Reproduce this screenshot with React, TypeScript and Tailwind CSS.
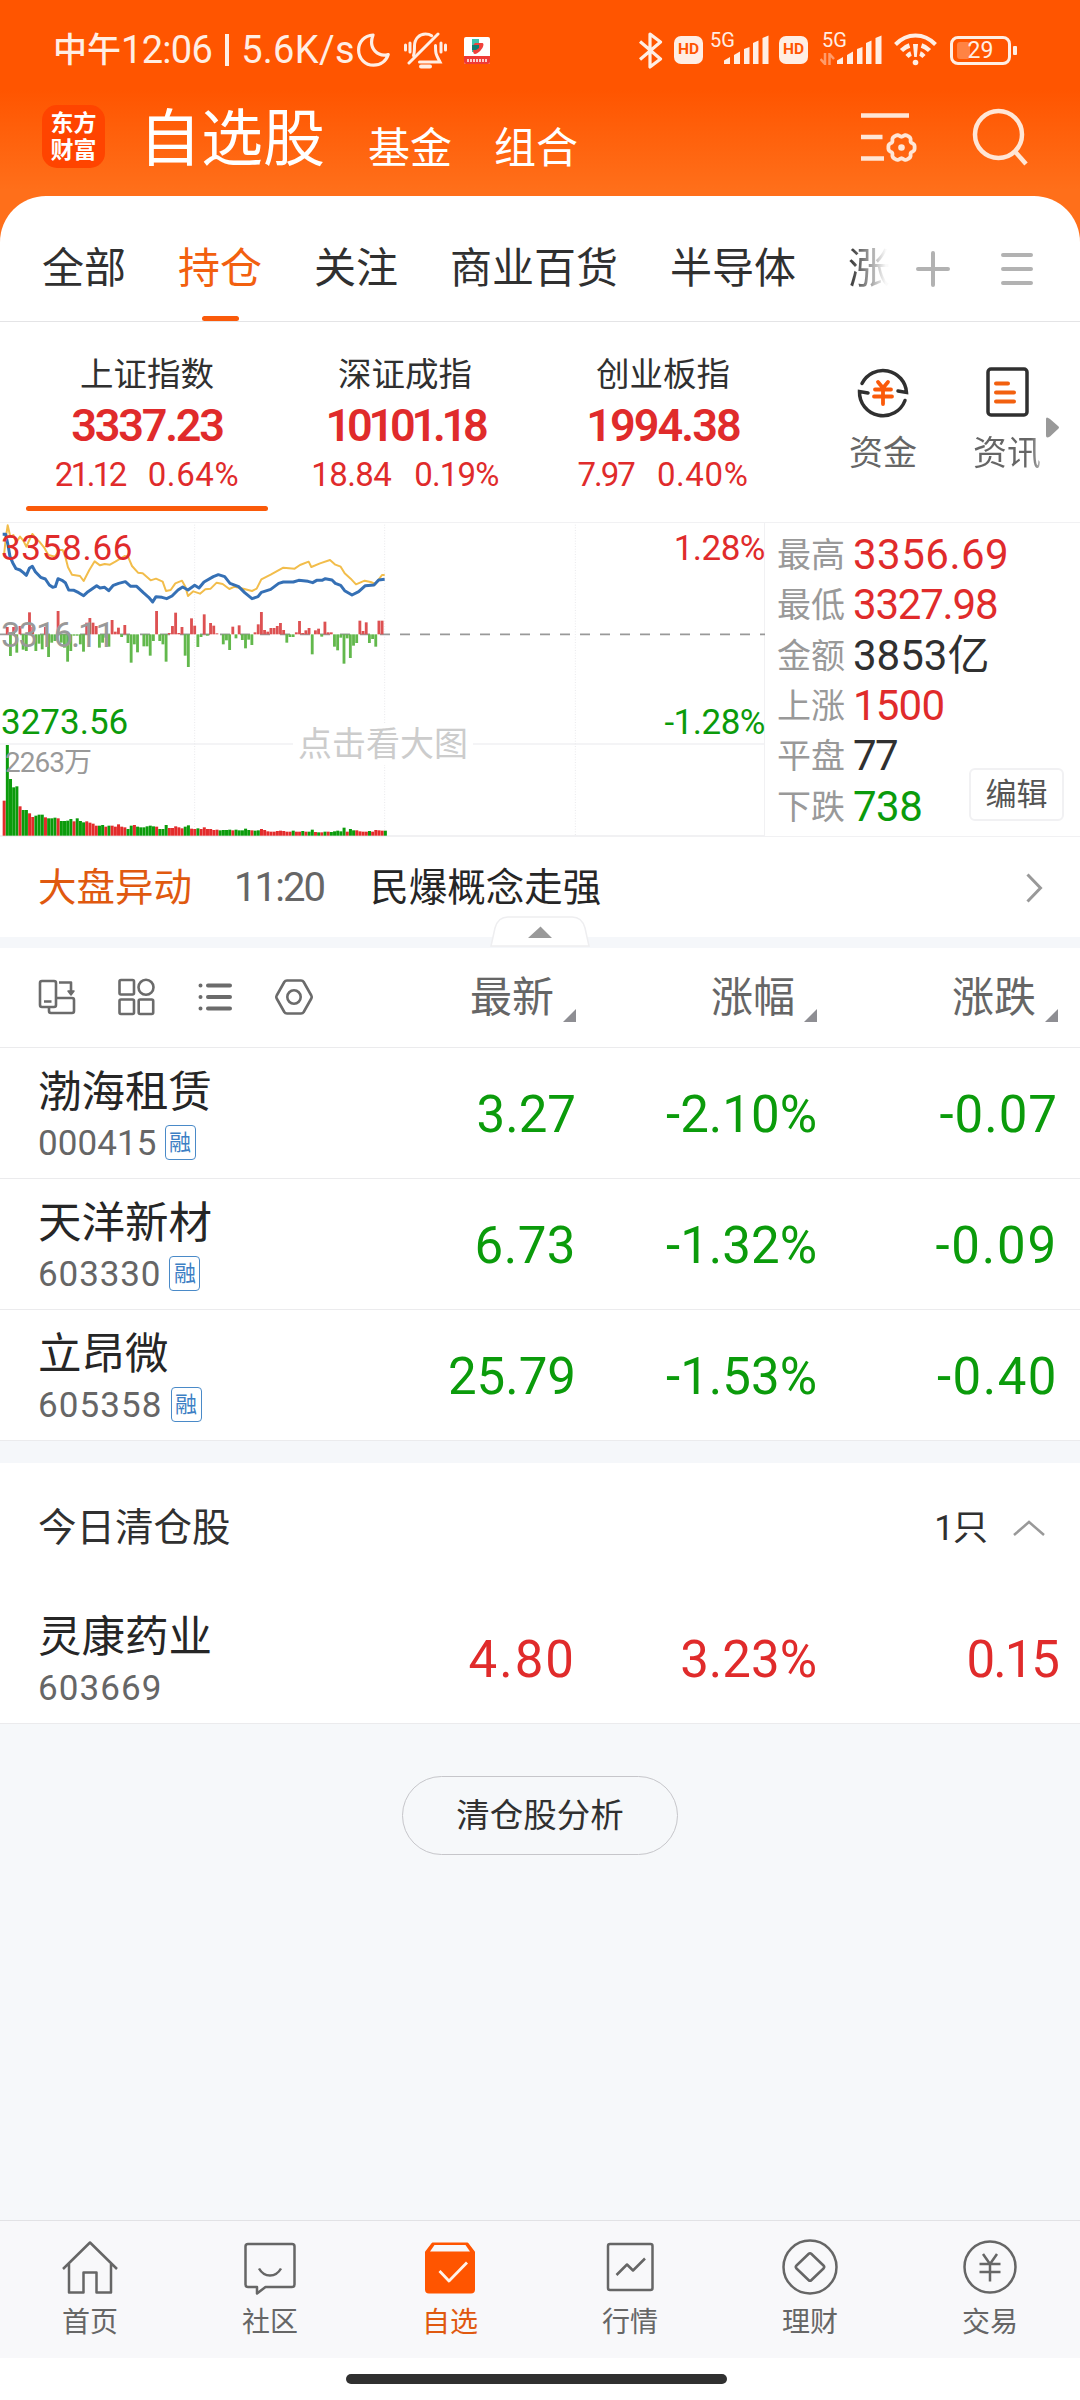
import type { ReactNode } from "react";

const RED = "text-[#e02b2b]";
const GREEN = "text-[#0b9b0b]";

/* ---------- status bar ---------- */

const SignalBars = () => (
  <svg width="45" height="30" viewBox="0 0 45 30" fill="#ffeee4">
    <path d="M0 29v-3.500l6-3.500v7z" />
    <path d="M10 29V20l6-3.500V29z" />
    <path d="M20 29V14l5.500-2V29z" />
    <path d="M29 29V8l5.500-2.500V29z" />
    <path d="M38.500 29V3l6-2.500V29z" />
  </svg>
);

const HdBadge = () => (
  <span className="flex h-[28px] w-[29px] items-center justify-center rounded-[7px] bg-[#ffeee4] text-[15.500px] font-bold leading-none text-[#ff5500]">
    HD
  </span>
);

const StatusBar = () => (
  <div className="flex h-[100px] items-center pl-[53px] text-[#ffeee4]">
    <div className="flex w-[304px] items-center leading-none">
      <span className="text-[34px] font-medium">中午</span>
      <span className="text-[38px] tracking-[-0.7px]">12:06</span>
      <span className="ml-[13px] h-[32px] w-[4px] bg-[#ffeee4]" />
      <span className="ml-[12px] text-[38px] tracking-[0.3px]">5.6K/s</span>
    </div>
    <svg width="33" height="34" viewBox="0 0 33 34" fill="none" stroke="#ffeee4" strokeWidth="3.2" strokeLinejoin="round">
      <path d="M16 2C7.500 2.500 1.600 9 1.600 17c0 8.500 6.500 15.200 15 15.200 7 0 12.600-4.200 14.600-10.700-9.500 2.500-20.500-5-15.200-19.500z" />
    </svg>
    <svg className="ml-[14px]" width="43" height="37" viewBox="0 0 43 37" fill="none" stroke="#ffeee4" strokeWidth="3" strokeLinecap="round">
      <path d="M5 31 34 2" />
      <path d="M9.500 23.500c1-2.500 1-4.500 1-9.500C10.500 6.500 15.500 2 21.500 2c2.500 0 4.500.6 6.200 1.700" />
      <path d="M31.500 13.500c0 9 .5 9 4.500 16.500H15.500" />
      <path d="M1.500 13v5M6 11v9M41.500 13v5M37 11v9" />
      <path d="M17 34.500h9" strokeWidth="4" />
    </svg>
    <svg className="ml-[17px]" width="26" height="27" viewBox="0 0 26 27">
      <rect width="26" height="27" rx="2" fill="#fff" />
      <path d="M8 2h7v9l-3.500 4H8z" fill="#3fc4ad" />
      <path d="M9 8.500 11 6h7c4 0-1 10-7 11-2 .3-2-3-2-8.500z" fill="#f0413c" />
      <path d="M8 8h7v3l-3 2H8z" fill="#0f7f72" />
      <path d="M0 19h26v6a2 2 0 0 1-2 2H2a2 2 0 0 1-2-2z" fill="#ef3a36" />
      <path d="M3 23.500h20" stroke="#fff" strokeWidth="3" strokeDasharray="2 1" opacity=".75" />
    </svg>

    <svg className="ml-[149px]" width="24" height="37" viewBox="0 0 24 37" fill="none" stroke="#ffeee4" strokeWidth="3.200" strokeLinejoin="round">
      <path d="M1 9.500 21.500 27 11 35V2l10.500 8L1 27.500" />
    </svg>
    <div className="ml-[11px]">
      <HdBadge />
    </div>
    <div className="relative ml-[21px] flex">
      <SignalBars />
      <span className="absolute -left-[14px] -top-[5px] text-[20px] leading-none">5G</span>
    </div>
    <div className="ml-[10px]">
      <HdBadge />
    </div>
    <div className="relative ml-[29px] flex">
      <SignalBars />
      <span className="absolute -left-[15px] -top-[5px] text-[20px] leading-none">5G</span>
      <svg className="absolute -left-[17px] bottom-0" width="15" height="12" viewBox="0 0 15 12" fill="none" stroke="#ff9c6b" strokeWidth="2.500">
        <path d="M5 0v11L.500 6M9.500 12V1L14 6" />
      </svg>
    </div>
    <svg className="ml-[12px]" width="43" height="34" viewBox="0 0 43 34" fill="none" stroke="#ffeee4">
      <path d="M1.500 11.500C13-.5 30-.5 41.500 11.500" strokeWidth="4" />
      <path d="M7.500 17.500c2.500-2.500 5-4 8-5M35.500 17.500c-2.500-2.500-5-4-8-5" strokeWidth="4.500" />
      <path d="M13 23.500c1.500-1.500 2.500-2.500 4-3M30 23.500c-1.500-1.500-2.500-2.500-4-3" strokeWidth="4.500" />
      <path d="M19 11h5l-1.200 13h-2.600z" fill="#ffeee4" stroke="none" />
      <circle cx="21.500" cy="29.500" r="2.800" fill="#ffeee4" stroke="none" />
    </svg>
    <div className="relative ml-[13px] flex h-[29px] w-[61px] items-center justify-center rounded-[8px] border-[3px] border-[#ffeee4]">
      <span className="absolute left-[4px] top-[3px] h-[17px] w-[13px] rounded-[3px] bg-[#ff8344]" />
      <span className="relative text-[23px] leading-none">29</span>
      <span className="absolute -right-[9px] top-[7px] h-[9px] w-[4px] rounded-[1px] bg-[#ffeee4]" />
    </div>
  </div>
);

/* ---------- title bar ---------- */

const gearPath =
  Array.from({ length: 72 }, (_, i) => {
    const a = (i * Math.PI) / 36;
    const r = 12.3 + 1.2 * Math.cos(6 * a) - 0.4 * Math.cos(12 * a);
    return `${i ? "L" : "M"}${(r * Math.cos(a)).toFixed(2)} ${(r * Math.sin(a)).toFixed(2)}`;
  }).join("") + "Z";

const TitleBar = () => (
  <div className="flex h-[96px] items-end pl-[42px] pr-[52px] leading-none text-white">
    <div className="mb-[28px] flex h-[63px] w-[63px] flex-col items-center justify-center rounded-[15px] bg-[#ff4400] text-[23px] font-bold leading-[27px]">
      <span>东方</span>
      <span>财富</span>
    </div>
    <span className="mb-[25px] ml-[34px] text-[62px]">自选股</span>
    <span className="mb-[26px] ml-[43px] text-[42px]">基金</span>
    <span className="mb-[26px] ml-[42px] text-[42px]">组合</span>
    <svg className="mb-[32px] ml-auto" width="58" height="56" viewBox="0 0 58 56" fill="none" stroke="#ffe6d6" strokeWidth="4.500">
      <path d="M0 7.500h48M0 29h21.500M0 50.500h23" />
      <path d={gearPath} transform="translate(40.500 39.500)" strokeWidth="3.800" strokeLinejoin="round" />
      <circle cx="40.500" cy="39.500" r="3.300" fill="#ffe6d6" stroke="none" />
    </svg>
    <svg className="mb-[30px] ml-[53px]" width="56" height="58" viewBox="0 0 56 58" fill="none" stroke="#ffe6d6" strokeWidth="4.500">
      <circle cx="26.500" cy="26.500" r="23.500" />
      <path d="M43 43.500 54 56" />
    </svg>
  </div>
);

/* ---------- group tabs ---------- */

const tabs = ["全部", "持仓", "关注", "商业百货", "半导体"];

const GroupTabs = () => (
  <div className="flex h-[126px] items-center border-b border-[#e4e4e6] pl-[42px] pt-[21px] text-[42px] leading-none text-[#303030]">
    <div className="flex gap-[52px]">
      {tabs.map((t) => (
        <div key={t} className={t === "持仓" ? "relative text-[#f2600f]" : "relative"}>
          {t}
          {t === "持仓" && (
            <span className="absolute -bottom-[31px] left-[24px] h-[5px] w-[37px] rounded-full bg-[#fa5a0a]" />
          )}
        </div>
      ))}
      <span className="w-[42px] bg-gradient-to-r from-[#303030] to-[#fafafa] to-90% bg-clip-text text-transparent">涨</span>
    </div>
    <svg className="ml-[26px]" width="34" height="36" viewBox="0 0 34 36" stroke="#b2b2b2" strokeWidth="4" strokeLinecap="round">
      <path d="M2 18h30M17 2v32" />
    </svg>
    <svg className="ml-[51px]" width="32" height="34" viewBox="0 0 32 34" stroke="#b2b2b2" strokeWidth="4" strokeLinecap="round">
      <path d="M2 3h28M2 17h28M2 31h28" />
    </svg>
  </div>
);

/* ---------- indices ---------- */

const indices = [
  {
    name: "上证指数",
    value: { text: "3337.23", spacing: "tracking-[-2.2px]" },
    diff: { text: "21.12", spacing: "tracking-[-2.6px]" },
    pct: { text: "0.64%", spacing: "tracking-[0.6px]" },
  },
  {
    name: "深证成指",
    value: { text: "10101.18", spacing: "tracking-[-4.2px]" },
    diff: { text: "18.84", spacing: "tracking-[-0.6px]" },
    pct: { text: "0.19%", spacing: "tracking-[-0.8px]" },
  },
  {
    name: "创业板指",
    value: { text: "1994.38", spacing: "tracking-[-1.9px]" },
    diff: { text: "7.97", spacing: "tracking-[-2px]" },
    pct: { text: "0.40%", spacing: "tracking-[0.6px]" },
  },
];

const IndexStrip = () => (
  <div className="relative flex h-[200px] pl-[18px] leading-none">
    {indices.map((it, i) => (
      <div key={it.name} className="relative flex w-[258px] flex-col items-center pt-[36px]">
        <span className="text-[33.500px] text-[#303030]">{it.name}</span>
        <span className={`mt-[11px] text-[45px] font-semibold ${it.value.spacing} ${RED}`}>{it.value.text}</span>
        <span className={`mt-[10px] flex gap-[23px] text-[33px] ${RED}`}>
          <span className={it.diff.spacing}>{it.diff.text}</span>
          <span className={it.pct.spacing}>{it.pct.text}</span>
        </span>
        {i === 0 && <span className="absolute left-[8px] top-[184px] h-[5px] w-[242px] rounded-full bg-[#fa5a0a]" />}
      </div>
    ))}
    <div className="ml-[41px] flex w-[100px] flex-col items-center pt-[43px]">
      <svg width="54" height="54" viewBox="0 0 54 54" fill="none" stroke="#303030" strokeWidth="3.500">
        <path d="M6 18.500A23.500 23.500 0 0 1 50.500 27.500L42 26" strokeLinecap="round" />
        <path d="M49 35.500A23.500 23.500 0 0 1 3.500 26.500L12 28" strokeLinecap="round" />
        <path d="m22 17 5 6 5-6M19 24.500h16M18 31.500h18M27 23v16" stroke="#fa5a0a" strokeWidth="3.800" strokeLinecap="round" />
      </svg>
      <span className="mt-[17px] text-[34px] text-[#666]">资金</span>
    </div>
    <div className="ml-[24px] flex w-[100px] flex-col items-center pt-[45px]">
      <svg width="43" height="50" viewBox="0 0 43 50" fill="none" stroke="#303030" strokeWidth="3.500">
        <rect x="2" y="2" width="39" height="46" rx="3" />
        <path d="M10 16.500h12M10 25.500h18M10 34.500h18" stroke="#f2600f" strokeWidth="4" strokeLinecap="round" />
      </svg>
      <span className="mt-[19px] bg-gradient-to-r from-[#666] from-85% to-[#bbb] bg-clip-text text-[34px] text-transparent">资讯</span>
    </div>
    <svg className="absolute left-[1046px] top-[95px]" width="14" height="21" viewBox="0 0 14 21" fill="#999">
      <path d="M0 2q0-3 4 0l8 7q2 1.500 0 3L4 19.500q-4 2.500-4-1z" />
    </svg>
  </div>
);

/* ---------- minute chart ---------- */

// per-minute momentum, above or below the previous close
const momentum = [
  0, 22, -65, 22, -55, 25, -46, -50, 66, 22, -50, -28, -45, 22, -68, -25, -20, 70, -25, -40, -82, -50, -4, -4, -30, -52,
  35, 49, 35, 25, -40, -25, -10, -37, 43, 8, 20, -8, 28, -26, -85, -30, -54, 0, -36, -36, -64, -20, 70, -20, -30, -82,
  4, 25, 65, 4, 22, -64, -98, 48, 26, -38, -8, 60, -4, 34, 26, 3, 0, -30, -18, -47, 23, -12, 27, -17, -42, -16, -32, 6,
  30, 67, 13, 8, 19, 19, 25, 34, 13, -25, -8, -8, 6, 40, 4, 12, 19, -60, 12, 17, -7, 38, 6, 6, -37, -48, -10, -88, -12,
  -71, -34, -26, 41, 10, 36, -26, -14, -37, 41, 41,
];

// per-minute volume; negative values are falling minutes
const volume = [
  105, -272, -170, -145, -148, 88, -77, -77, 67, 56, -60, -63, -63, 55, -52, -52, -54, 52, -44, -44, -45, -50, 43, -52,
  -44, -40, 43, 39, 36, 30, -30, -32, 27, -30, 30, 27, 34, 27, 25, -20, -30, 32, -27, -25, -25, -28, -30, -28, 27, -20,
  -20, -32, 23, 23, 28, 25, 22, -27, -31, 21, 20, -22, 20, 25, 20, 20, 17, 18, -16, -17, -17, -18, 16, -18, -16, -16,
  -21, -17, 16, -15, -16, 20, 17, 13, 12, 12, 14, 15, 14, 12, 12, -15, 12, 12, -14, 12, -12, -18, 11, -10, 10, -12, 12,
  -11, -13, -15, -13, -24, 12, -20, -16, 16, 13, 12, 12, -14, 12, 17, 16, 15, -15,
];

const priceLine =
  "8,73 17,73 24,105 30,140 38,158 48,176 60,180 70,188 79,196 88,175 97,169 106,185 122,202 136,207 148,225 158,232 166,230 174,206 186,211 196,218 206,240 222,241 236,248 251,257 264,245 290,227 300,234 314,232 326,242 340,226 356,220 376,215 392,229 410,229 430,248 446,262 458,276 468,260 486,262 500,266 516,258 534,240 548,231 564,240 584,226 597,234 612,216 640,200 655,194 674,200 690,220 716,230 734,248 756,266 774,260 784,247 812,238 836,220 850,216 880,216 896,211 924,214 938,218 950,211 966,211 976,206 996,210 1006,220 1022,226 1034,242 1056,255 1076,245 1096,227 1122,225 1136,210 1154,208";

const averageLine =
  "12,135 18,80 23,46 31,80 40,75 50,95 60,80 70,92 79,110 88,90 97,72 108,85 118,95 132,112 145,135 165,140 178,120 188,120 196,140 204,172 216,194 240,198 251,213 268,180 284,154 300,166 314,162 330,164 346,155 374,138 384,140 396,168 414,188 428,190 452,211 468,206 488,215 498,243 512,240 526,220 546,212 556,230 564,258 580,244 600,251 616,238 632,236 650,218 668,222 688,237 704,230 730,236 756,243 770,236 784,208 812,194 850,173 884,176 900,165 926,155 934,171 960,160 990,150 1006,164 1022,170 1034,190 1052,206 1068,223 1094,212 1112,216 1126,222 1146,195 1154,195";

// drawn at three units per pixel
const MinuteChart = () => (
  <svg className="block" width="765" height="314" viewBox="0 39 2295 942">
    <g stroke="#f1f1f3" strokeWidth="4">
      <path d="M0 702h2295M0 977h2295" />
      <path d="M584 44v932M1154 44v932M1726 44v932" strokeDasharray="3 5" stroke="#e9e9ec" strokeWidth="3" />
    </g>
    <path d="M0 373h2295" stroke="#999" strokeWidth="5" strokeDasharray="30 30" />
    {momentum.map((m, i) => (
      <rect
        key={i}
        x={8 + i * 9.53}
        y={m > 0 ? 373 - m : 373}
        width="8.5"
        height={Math.abs(m)}
        fill={m > 0 ? "#dd5152" : "#62b84c"}
      />
    ))}
    {volume.map((v, i) => (
      <rect key={i} x={8 + i * 9.53} y={977 - Math.abs(v)} width="9" height={Math.abs(v)} fill={v > 0 ? "#e32b2b" : "#0b9b0b"} />
    ))}
    <polyline points={averageLine} fill="none" stroke="#f2bd4b" strokeWidth="6" strokeLinejoin="round" />
    <polyline points={priceLine} fill="none" stroke="#3570b5" strokeWidth="9" strokeLinejoin="round" />
  </svg>
);

const marketStats = [
  { label: "最高", value: "3356.69", style: "tracking-[0.5px] text-[#e02b2b]" },
  { label: "最低", value: "3327.98", style: "tracking-[-1.2px] text-[#e02b2b]" },
  { label: "金额", value: "3853亿", style: "text-[#303030]" },
  { label: "上涨", value: "1500", style: "tracking-[-0.8px] text-[#e02b2b]" },
  { label: "平盘", value: "77", style: "tracking-[-1.5px] text-[#303030]" },
  { label: "下跌", value: "738", style: "tracking-[-0.5px] text-[#0b9b0b]" },
];

const ChartPanel = () => (
  <div className="relative flex h-[315px] border-y border-[#f1f1f3] leading-none">
    <div className="relative w-[765px] border-r border-[#f1f1f3]">
      <MinuteChart />
      <span className={`absolute left-[1px] top-[8px] text-[35px] tracking-[0.7px] ${RED}`}>3358.66</span>
      <span className="absolute left-[1px] top-[95px] text-[35px] tracking-[-2.2px] text-[#999]">3316.11</span>
      <span className={`absolute left-[1px] top-[182px] text-[35px] ${GREEN}`}>3273.56</span>
      <span className={`absolute -right-[1px] top-[8px] text-[35px] tracking-[-0.5px] ${RED}`}>1.28%</span>
      <span className={`absolute -right-[1px] top-[182px] text-[35px] tracking-[-0.5px] ${GREEN}`}>-1.28%</span>
      <span className="absolute left-[5px] top-[226px] text-[28px] tracking-[-1px] text-[#999]">2263万</span>
      <span className="absolute left-[293px] top-[200px] bg-white px-[5px] py-[4px] text-[34px] text-[#ccc]">点击看大图</span>
    </div>
    <div className="flex flex-col pl-[12px] pt-[7px]">
      {marketStats.map((s) => (
        <div key={s.label} className="flex h-[50.300px] items-center">
          <span className="w-[76px] text-[34px] text-[#999]">{s.label}</span>
          <span className={`text-[42px] ${s.style}`}>{s.value}</span>
        </div>
      ))}
    </div>
    <button className="absolute bottom-[15px] right-[16px] h-[53px] w-[95px] rounded-[6px] border-2 border-[#f1f1f3] bg-white text-[31px] text-[#555]">
      编辑
    </button>
  </div>
);

const NewsRow = () => (
  <div className="relative flex h-[111px] items-center border-b-[11px] border-[#f5f7fa] pl-[38px] pt-[2px] leading-none">
    <span className="text-[38.500px] text-[#e0590f]">大盘异动</span>
    <span className="ml-[42px] text-[40px] tracking-[-1.9px] text-[#666]">11:20</span>
    <span className="ml-[46px] text-[38.500px] text-[#262626]">民爆概念走强</span>
    <svg className="ml-auto mr-[37px]" width="17" height="30" viewBox="0 0 17 30" fill="none" stroke="#999" strokeWidth="3">
      <path d="m1.500 1.500 13 13.500-13 13.500" />
    </svg>
    <svg className="absolute -bottom-[10px] left-[490px]" width="100" height="31" viewBox="0 0 100 31">
      <path d="M1 30 5 12Q8 1 18 1h64q10 0 13 11l4 18z" fill="#fff" stroke="#eeeef0" strokeWidth="1.500" />
      <path d="m38 22 12-11q0-1 1 0l11 11z" fill="#999" />
    </svg>
  </div>
);

/* ---------- watch list ---------- */

const SortHeader = ({ children, className }: { children: ReactNode; className: string }) => (
  <div className={`flex items-center justify-end ${className}`}>
    <span>{children}</span>
    <svg className="ml-[9px] mt-[35px]" width="13" height="13" viewBox="0 0 13 13" fill="#8e8e93">
      <path d="M13 0v13H0z" />
    </svg>
  </div>
);

const ListHeader = () => (
  <div className="flex h-[100px] items-center border-b border-[#ebebed] pl-[38px] text-[42px] leading-none text-[#666]">
    <div className="flex w-[298px] items-center pb-[2px] text-[#6b6b6b]">
      <svg width="38" height="36" viewBox="0 0 38 36" fill="none" stroke="currentColor" strokeWidth="2.600" strokeLinejoin="round">
        <rect x="2" y="2" width="16" height="26" rx="2" />
        <path d="M6 22.500h7.500M18 19h16q2 0 2 2v11q0 2-2 2H13q-2 0-2-2v-4" />
        <path d="M21 3.500h12V13" />
        <path d="M30 12h6l-3 4z" fill="currentColor" strokeWidth="1.500" />
      </svg>
      <svg className="ml-[41px]" width="38" height="38" viewBox="0 0 38 38" fill="none" stroke="currentColor" strokeWidth="2.600">
        <rect x="2.500" y="2" width="14.500" height="14.500" rx="1.500" />
        <circle cx="29" cy="9.300" r="7.500" />
        <rect x="2.500" y="21.500" width="14.500" height="14.500" rx="1.500" />
        <rect x="21.700" y="21.500" width="14.500" height="14.500" rx="1.500" />
      </svg>
      <svg className="ml-[43px]" width="34" height="32" viewBox="0 0 34 32" fill="none" stroke="currentColor" strokeWidth="4" strokeLinecap="round">
        <path d="M10 4.500h22M10 16h22M10 27.500h22M2.500 4.500h.01M2.500 16h.01M2.500 27.500h.01" />
      </svg>
      <svg className="ml-[43px]" width="38" height="38" viewBox="0 0 38 38" fill="none" stroke="currentColor" strokeWidth="2.600" strokeLinejoin="round">
        <path d="M12 2.500h14q1.800 0 2.700 1.500l7.600 13.500q.8 1.500 0 3l-7.600 13.500q-.9 1.500-2.700 1.500H12q-1.800 0-2.700-1.500L1.700 20.500q-.8-1.500 0-3L9.300 4q.9-1.500 2.700-1.500z" />
        <circle cx="19" cy="19" r="6.700" />
      </svg>
    </div>
    <SortHeader className="w-[240px]">最新</SortHeader>
    <SortHeader className="w-[241px]">涨幅</SortHeader>
    <SortHeader className="w-[241px]">涨跌</SortHeader>
  </div>
);

type Stock = {
  name: string;
  code: string;
  codeSpacing: string;
  price: string;
  priceSpacing: string;
  pct: string;
  diff: string;
  diffSpacing: string;
  margin?: boolean;
};

const holdings: Stock[] = [
  {
    name: "渤海租赁",
    code: "000415",
    codeSpacing: "tracking-[0.1px]",
    price: "3.27",
    priceSpacing: "tracking-[0px]",
    pct: "-2.10%",
    diff: "-0.07",
    diffSpacing: "tracking-[1px]",
    margin: true,
  },
  {
    name: "天洋新材",
    code: "603330",
    codeSpacing: "tracking-[0.9px]",
    price: "6.73",
    priceSpacing: "tracking-[0.5px]",
    pct: "-1.32%",
    diff: "-0.09",
    diffSpacing: "tracking-[1.8px]",
    margin: true,
  },
  {
    name: "立昂微",
    code: "605358",
    codeSpacing: "tracking-[1.1px]",
    price: "25.79",
    priceSpacing: "tracking-[0px]",
    pct: "-1.53%",
    diff: "-0.40",
    diffSpacing: "tracking-[1.5px]",
    margin: true,
  },
];

const cleared: Stock = {
  name: "灵康药业",
  code: "603669",
  codeSpacing: "tracking-[1.1px]",
  price: "4.80",
  priceSpacing: "tracking-[2px]",
  pct: "3.23%",
  diff: "0.15",
  diffSpacing: "tracking-[-2px]",
};

const StockRow = ({ stock }: { stock: Stock }) => (
  <div className="flex h-[131px] border-b border-[#ebebed] pl-[38px] leading-none">
    <div className="w-[298px] pt-[23px]">
      <div className="text-[43.500px] text-[#262626]">{stock.name}</div>
      <div className="mt-[10px] flex h-[36px] items-center">
        <span className={`pt-[2px] text-[35px] text-[#666] ${stock.codeSpacing}`}>{stock.code}</span>
        {stock.margin && (
          <span className="ml-[8px] flex h-[35px] w-[31px] items-center justify-center rounded-[4px] border-[1.500px] border-[#4a8ac8] text-[22px] text-[#3d7fc4]">
            融
          </span>
        )}
      </div>
    </div>
    <div className={`flex items-center pt-[3px] text-[51px] ${stock.diff.startsWith("-") ? GREEN : RED}`}>
      <span className={`w-[240px] text-right ${stock.priceSpacing}`}>{stock.price}</span>
      <span className="w-[241px] text-right">{stock.pct}</span>
      <span className={`w-[241px] text-right ${stock.diffSpacing}`}>{stock.diff}</span>
    </div>
  </div>
);

const ClearedSection = () => (
  <div className="border-t-[22px] border-[#f5f7fa] bg-white">
    <div className="flex h-[130px] items-center pl-[38px] pr-[34px] text-[38.500px] leading-none text-[#303030]">
      <span>今日清仓股</span>
      <span className="ml-auto text-[35px] tracking-[-1px]">1只</span>
      <svg className="ml-[25px]" width="34" height="18" viewBox="0 0 34 18" fill="none" stroke="#999" strokeWidth="2.500">
        <path d="M2 16 17 3l15 13" />
      </svg>
    </div>
    <StockRow stock={cleared} />
  </div>
);

/* ---------- bottom navigation ---------- */

const navItems: { label: string; active?: boolean; icon: ReactNode }[] = [
  {
    label: "首页",
    icon: <path d="M3 30 30 3.500 57 30M9 25v28.500h14.500V33.500h13v20H51V25" />,
  },
  {
    label: "社区",
    icon: (
      <>
        <path d="M8 5h44q2.500 0 2.500 2.500v38q0 2.500-2.500 2.500H25.500L17 54.500V48H8q-2.500 0-2.500-2.500v-38Q5.500 5 8 5z" />
        <path d="M19 29.500q4 7 11 7t11-7" />
      </>
    ),
  },
  {
    label: "自选",
    active: true,
    icon: (
      <>
        <path d="M6 13v37.500q0 3 3 3h42q3 0 3-3V13l-6.500-8.500h-35z" fill="#ff5500" stroke="#ff5500" strokeWidth="2" />
        <path d="M14.500 6h31l4.500 6.500H10z" fill="#f8f8fa" stroke="none" />
        <path d="m19.500 32 9.500 10 18-18.500" stroke="#fff3ea" strokeWidth="2.800" />
      </>
    ),
  },
  {
    label: "行情",
    icon: (
      <>
        <rect x="8" y="5" width="44.500" height="46" rx="2" />
        <path d="m16.500 36 10.500-10.500 6 6L45 19.500" />
      </>
    ),
  },
  {
    label: "理财",
    icon: (
      <>
        <circle cx="30" cy="28" r="26.500" />
        <path d="m28.500 15-12 11.500q-1.500 1.500 0 3l12 11.500q1.500 1.500 3 0l12-11.500q1.500-1.500 0-3L31.500 15q-1.500-1.500-3 0z" />
      </>
    ),
  },
  {
    label: "交易",
    icon: (
      <>
        <circle cx="30" cy="28" r="25.500" />
        <path d="m23 15 7 10 7-10M19.500 25h21M19.500 33h21M30 25v17.500" />
      </>
    ),
  },
];

const BottomNav = () => (
  <nav className="flex h-[138px] border-t border-[#e2e2e5] bg-[#f8f8fa]">
    {navItems.map((n) => (
      <div key={n.label} className={`flex w-[180px] flex-col items-center pt-[18px] ${n.active ? "text-[#e0590f]" : "text-[#666]"}`}>
        <svg width="60" height="58" viewBox="0 0 60 58" fill="none" stroke="currentColor" strokeWidth="2.500" strokeLinejoin="round">
          {n.icon}
        </svg>
        <span className="mt-[12px] text-[28px] leading-none">{n.label}</span>
      </div>
    ))}
  </nav>
);

const App = () => (
  <div className="flex h-[2400px] w-[1080px] flex-col overflow-hidden bg-[linear-gradient(to_bottom,#ff5500_0,#ff5500_90px,#ff6f1a_190px)] font-['Roboto','Noto_Sans_CJK_SC',sans-serif]">
    <StatusBar />
    <TitleBar />
    <main className="flex flex-1 flex-col rounded-t-[46px] bg-white">
      <GroupTabs />
      <IndexStrip />
      <ChartPanel />
      <NewsRow />
      <ListHeader />
      {holdings.map((s) => (
        <StockRow key={s.code} stock={s} />
      ))}
      <ClearedSection />
      <div className="flex flex-1 justify-center bg-[#f6f8fa] pt-[52px]">
        <button className="h-[79px] w-[276px] rounded-full border border-[#c6c6ca] text-[33.500px] leading-none text-[#303030]">
          清仓股分析
        </button>
      </div>
      <BottomNav />
      <div className="flex h-[42px] justify-center bg-white pr-[7px] pt-[16px]">
        <span className="h-[10px] w-[381px] rounded-full bg-[#303030]" />
      </div>
    </main>
  </div>
);

export default App;
